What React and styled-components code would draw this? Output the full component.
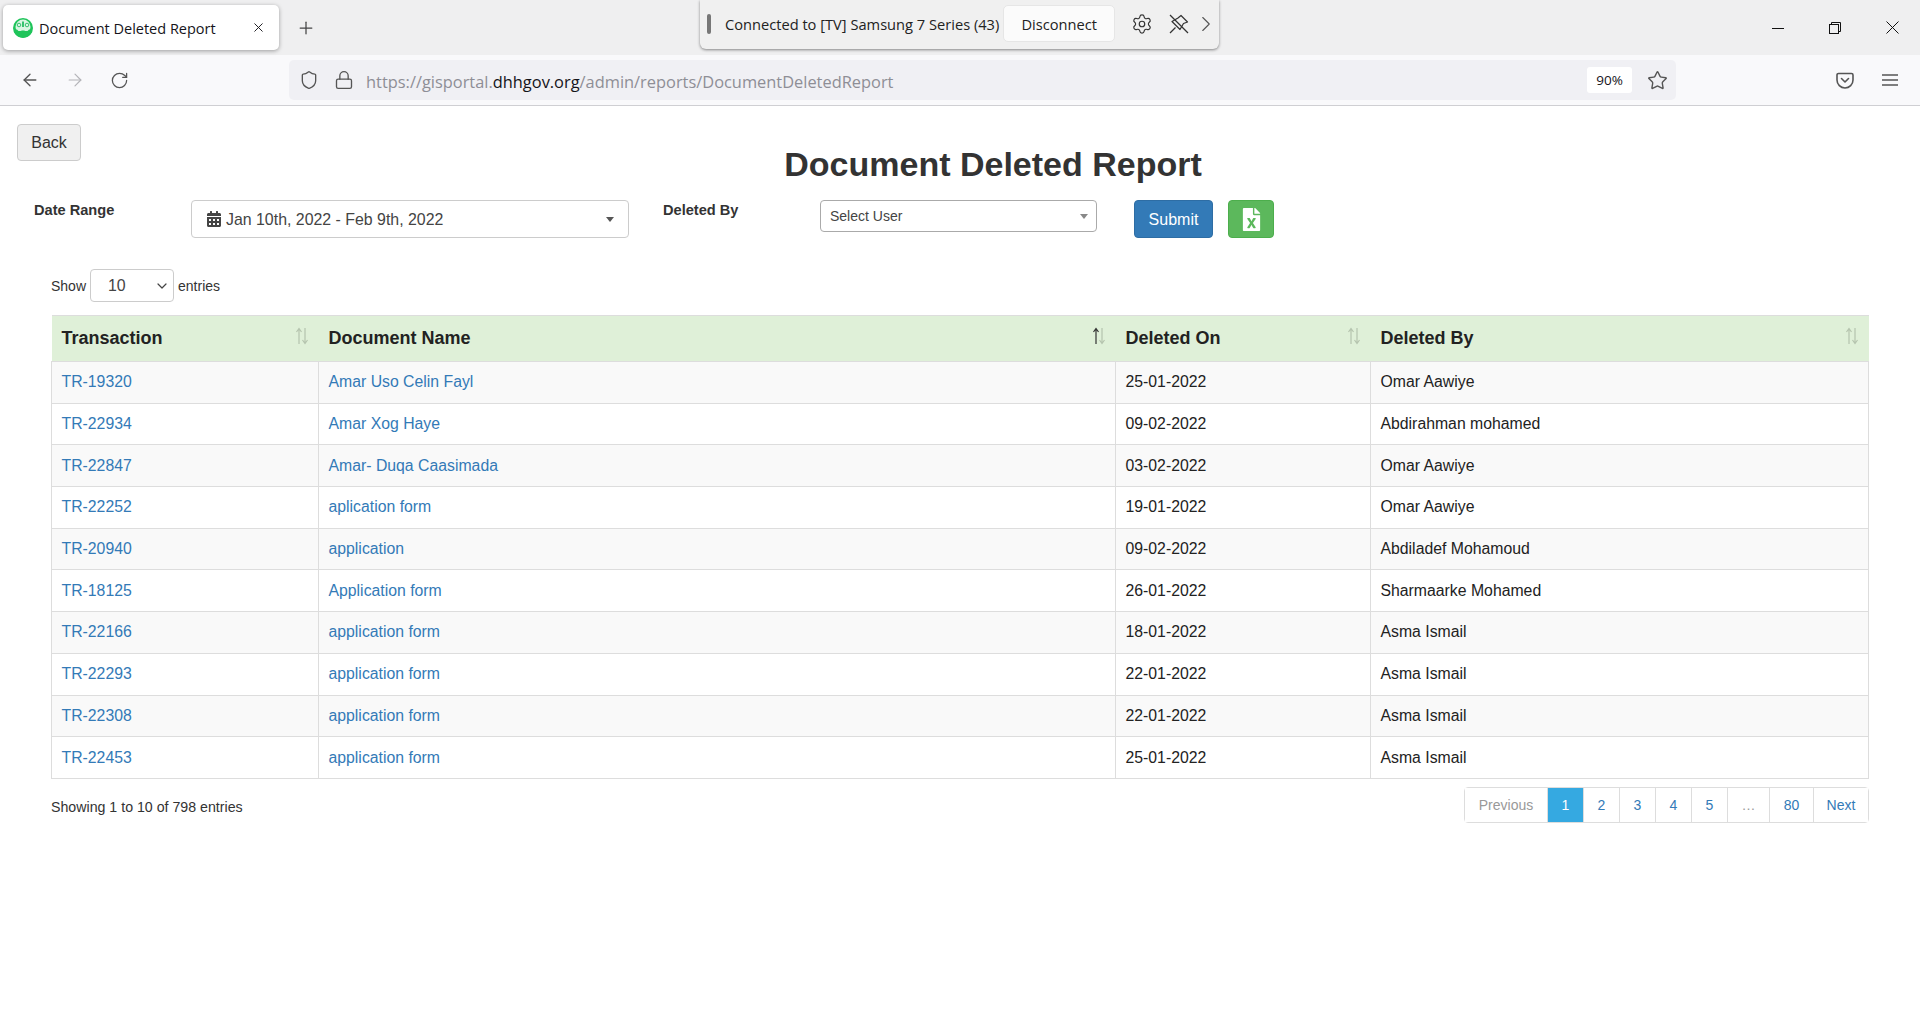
import React from 'react'
import styled, {createGlobalStyle} from 'styled-components'
import {ArrowLeft, ArrowRight, RotateCw, Shield, Lock, Star, Settings, ChevronRight, Plus, X, ChevronDown} from 'lucide-react'
import {FaCalendarAlt, FaFileExcel} from 'react-icons/fa'

const GlobalStyle = createGlobalStyle`
  html, body {
    margin: 0;
    background: #fff;
    font-family: "Liberation Sans", Arial, sans-serif;
    color: #333;
  }
`

// Browser chrome
const Browser = styled.div`
  position: relative;
  width: 1920px;
  height: 1020px;
  overflow: hidden;
  background: #fff;
`
const TabStrip = styled.div`
  height: 55px;
  background: #efeff0;
  display: flex;
  align-items: flex-start;
  padding: 5px 0 0 3px;
  box-sizing: border-box;
`
const Tab = styled.div`
  width: 276px;
  height: 45px;
  background: #fff;
  border-radius: 5px;
  box-shadow: 0 1px 4px rgba(0, 0, 0, .35);
  display: flex;
  align-items: center;
  padding: 0 13px 0 10px;
  box-sizing: border-box;
  font-family: "Open Sans", sans-serif;
  font-size: 14.5px;
  color: #15141a;
`
const TabTitle = styled.span`
  flex: 1;
  margin-left: 6px;
  padding-top: 2px;
  white-space: nowrap;
`
const NewTab = styled.div`
  margin: 13px 0 0 17px;
  color: #444;
  display: flex;
`
const WindowControls = styled.div`
  margin-left: auto;
  height: 45px;
  display: flex;
  align-items: center;
  gap: 45px;
  padding-right: 21px;
  color: #111;
`
const CastBar = styled.div`
  position: absolute;
  left: 700px;
  top: 0;
  width: 519px;
  height: 49px;
  background: #f0f0f0;
  border-radius: 0 0 6px 6px;
  box-shadow: 0 1px 3px rgba(0, 0, 0, .45);
  display: flex;
  align-items: center;
  padding: 0 0 2px 7px;
  box-sizing: border-box;
  font-family: "Open Sans", sans-serif;
  font-size: 14.65px;
  color: #222;
`
const CastGrip = styled.div`
  width: 4px;
  height: 20px;
  background: #777;
  border-radius: 2px;
  margin-right: 14px;
`
const CastLabel = styled.span`
  white-space: nowrap;
`
const DisconnectButton = styled.div`
  width: 112px;
  height: 37px;
  margin-left: 4px;
  background: #fbfbfb;
  border: 1px solid #e6e6e6;
  border-radius: 5px;
  box-sizing: border-box;
  display: flex;
  align-items: center;
  justify-content: center;
`
const CastIcons = styled.div`
  display: flex;
  align-items: center;
  gap: 16px;
  margin-left: 16px;
  color: #333;
`
const CastMore = styled.div`
  display: flex;
  margin-left: 4px;
  color: #555;
`
const Toolbar = styled.div`
  height: 51px;
  background: #f9f9fb;
  border-bottom: 1px solid #cfcfd3;
  box-sizing: border-box;
  display: flex;
  align-items: center;
  color: #555;
  padding-left: 20px;
`
const NavButtons = styled.div`
  display: flex;
  align-items: center;
  gap: 25px;
  width: 269px;
`
const UrlBar = styled.div`
  width: 1387px;
  height: 40px;
  background: #f0f0f4;
  border-radius: 5px;
  display: flex;
  align-items: center;
  padding: 0 8px 0 10px;
  box-sizing: border-box;
`
const LockWrap = styled.div`
  display: flex;
  margin-left: 15px;
`
const UrlText = styled.div`
  flex: 1;
  margin-left: 12px;
  padding-top: 2px;
  font-family: "Open Sans", sans-serif;
  font-size: 16.4px;
  color: #8e8e96;
  white-space: nowrap;
`
const UrlHost = styled.span`
  color: #15141a;
`
const Zoom = styled.div`
  width: 45px;
  height: 26px;
  background: #fff;
  border-radius: 3px;
  margin-right: 15px;
  display: flex;
  align-items: center;
  justify-content: center;
  font-family: "Open Sans", sans-serif;
  font-size: 13.5px;
  color: #15141a;
`
const ToolbarEnd = styled.div`
  display: flex;
  align-items: center;
  gap: 28px;
  margin-left: 160px;
`

// Report page
const Page = styled.div`
  padding-top: 18px;
`
const TopBar = styled.div`
  display: flex;
  align-items: flex-start;
  padding: 0 15px 0 17px;
`
const BackButton = styled.button`
  width: 64px;
  height: 37px;
  padding: 0;
  background: #f0f0f0;
  border: 1px solid #ccc;
  border-radius: 4px;
  font: 16px "Liberation Sans", Arial, sans-serif;
  color: #333;
`
const Title = styled.h2`
  flex: 1;
  margin: 18px 0 0;
  text-align: center;
  font-size: 34px;
  line-height: 44px;
  font-weight: 700;
  color: #333;
`
const FilterRow = styled.div`
  display: flex;
  align-items: flex-start;
  padding: 14px 0 0 34px;
`
const FilterLabel = styled.label`
  width: ${p => p.$width}px;
  font-size: 14.6px;
  line-height: 20px;
  font-weight: 700;
  color: #333;
`
const DatePicker = styled.div`
  width: 438px;
  height: 38px;
  border: 1px solid #ccc;
  border-radius: 4px;
  margin-right: 34px;
  box-sizing: border-box;
  display: flex;
  align-items: center;
  padding: 0 14px;
  font-size: 15.9px;
  color: #444;
`
const DateText = styled.span`
  flex: 1;
  margin-left: 4px;
  padding-top: 1px;
`
const Caret = styled.span`
  width: 0;
  height: 0;
  border-left: 4px solid transparent;
  border-right: 4px solid transparent;
  border-top: 5px solid ${p => p.$color || '#555'};
`
const UserSelect = styled.div`
  width: 277px;
  height: 32px;
  border: 1px solid #aaa;
  border-radius: 4px;
  box-sizing: border-box;
  display: flex;
  align-items: center;
  justify-content: space-between;
  padding: 0 8px 0 9px;
  font-size: 14px;
  color: #444;
`
const SubmitButton = styled.button`
  width: 79px;
  height: 38px;
  margin-left: 37px;
  padding: 1px 0 0;
  background: #337ab7;
  border: 1px solid #2e6da4;
  border-radius: 4px;
  font: 16px "Liberation Sans", Arial, sans-serif;
  color: #fff;
`
const ExcelButton = styled.button`
  width: 46px;
  height: 38px;
  margin-left: 15px;
  padding: 0;
  background: #5cb85c;
  border: 1px solid #4cae4c;
  border-radius: 4px;
  color: #fff;
  display: flex;
  align-items: center;
  justify-content: center;
`
const TableArea = styled.div`
  padding: 31px 51px 0;
`
const LengthRow = styled.div`
  display: flex;
  align-items: center;
  gap: 4px;
  height: 33px;
  font-size: 14px;
  color: #333;
`
const LengthSelect = styled.div`
  width: 84px;
  height: 33px;
  border: 1px solid #ccc;
  border-radius: 4px;
  box-sizing: border-box;
  display: flex;
  align-items: center;
  justify-content: space-between;
  padding: 0 3px 0 17px;
  font-size: 15.9px;
  color: #444;
`
const Table = styled.table`
  width: 1817px;
  margin-top: 13px;
  border-collapse: collapse;
  table-layout: fixed;
  font-size: 15.8px;
`
const HeadCell = styled.th`
  position: relative;
  width: ${p => p.$width}px;
  height: 46px;
  padding: 0 10px;
  box-sizing: border-box;
  background: #dff0d8;
  border-top: 1px solid #ddd;
  border-bottom: 1px solid #ddd;
  text-align: left;
  font-size: 18px;
  font-weight: 700;
  color: #222;
`
const SortMark = styled.svg`
  position: absolute;
  right: 10px;
  top: 11px;
`
const Row = styled.tr`
  background: ${p => (p.$odd ? '#f9f9f9' : '#fff')};
`
const Cell = styled.td`
  height: 41.7px;
  padding: 0 9.5px;
  box-sizing: border-box;
  border: 1px solid #ddd;
  color: #222;
`
const CellLink = styled.a`
  color: #337ab7;
  text-decoration: none;
`
const TableFooter = styled.div`
  display: flex;
  justify-content: space-between;
  align-items: flex-start;
  padding-top: 8px;
`
const Info = styled.div`
  padding-top: 10px;
  font-size: 14.2px;
  line-height: 20px;
  color: #333;
`
const Pager = styled.div`
  display: flex;
  height: 36px;
  border: 1px solid #ddd;
  border-radius: 4px;
  box-sizing: border-box;
  font-size: 14px;
`
const PageItem = styled.div`
  width: ${p => p.$width}px;
  box-sizing: border-box;
  display: flex;
  align-items: center;
  justify-content: center;
  border-left: ${p => (p.$first ? 'none' : '1px solid #ddd')};
  background: ${p => (p.$active ? '#35a9e1' : '#fff')};
  color: ${p => (p.$active ? '#fff' : p.$muted ? '#999' : '#337ab7')};
`

const pages = [
  {label: 'Previous', width: 82, muted: true, first: true},
  {label: '1', width: 36, active: true},
  {label: '2', width: 36},
  {label: '3', width: 36},
  {label: '4', width: 36},
  {label: '5', width: 36},
  {label: '…', width: 42, muted: true},
  {label: '80', width: 44},
  {label: 'Next', width: 55}
]

const rows = [
  ['TR-19320', 'Amar Uso Celin Fayl', '25-01-2022', 'Omar Aawiye'],
  ['TR-22934', 'Amar Xog Haye', '09-02-2022', 'Abdirahman mohamed'],
  ['TR-22847', 'Amar- Duqa Caasimada', '03-02-2022', 'Omar Aawiye'],
  ['TR-22252', 'aplication form', '19-01-2022', 'Omar Aawiye'],
  ['TR-20940', 'application', '09-02-2022', 'Abdiladef Mohamoud'],
  ['TR-18125', 'Application form', '26-01-2022', 'Sharmaarke Mohamed'],
  ['TR-22166', 'application form', '18-01-2022', 'Asma Ismail'],
  ['TR-22293', 'application form', '22-01-2022', 'Asma Ismail'],
  ['TR-22308', 'application form', '22-01-2022', 'Asma Ismail'],
  ['TR-22453', 'application form', '25-01-2022', 'Asma Ismail']
]

const Favicon = () => (
  <svg width='20' height='20' viewBox='0 0 20 20'>
    <circle cx='10' cy='10' r='10' fill='#1fc45a' />
    <circle cx='10' cy='9' r='7.5' fill='#d9f5e2' />
    <path d='M1 11c3 0 4 1 5 3 2-2 6-2 8 0 1-2 2-3 5-3v3a10 10 0 0 1-18 0z' fill='#1fc45a' />
    <path d='M2 13h16v2a10 10 0 0 1-16 0z' fill='#1fc45a' />
    <circle cx='6' cy='7' r='1.8' fill='none' stroke='#35c26e' />
    <circle cx='14' cy='7' r='1.8' fill='none' stroke='#35c26e' />
    <path d='M9 3.5h2V9H9z' fill='#35c26e' />
  </svg>
)

const MinimizeIcon = () => (
  <svg width='12' height='12' viewBox='0 0 12 12' stroke='currentColor'>
    <path d='M0 6.5h12' />
  </svg>
)

const RestoreIcon = () => (
  <svg width='12' height='12' viewBox='0 0 12 12' fill='none' stroke='currentColor'>
    <rect x='.5' y='2.5' width='9' height='9' />
    <path d='M2.5 2.5v-2h9v9h-2' />
  </svg>
)

const CloseIcon = () => (
  <svg width='13' height='13' viewBox='0 0 13 13' stroke='currentColor'>
    <path d='M.5.5l12 12M12.5.5l-12 12' />
  </svg>
)

const PocketIcon = () => (
  <svg width='18' height='17' viewBox='0 0 18 17' fill='none' stroke='currentColor' strokeWidth='1.6' strokeLinecap='round' strokeLinejoin='round'>
    <path d='M2.5 1.5h13a1.5 1.5 0 0 1 1.5 1.5v5a8 8 0 0 1-16 0V3a1.5 1.5 0 0 1 1.5-1.5z' />
    <path d='M5.5 6.5L9 10l3.5-3.5' />
  </svg>
)

const MenuIcon = () => (
  <svg width='16' height='12' viewBox='0 0 16 12' stroke='currentColor' strokeWidth='1.4'>
    <path d='M0 1h16M0 6h16M0 11h16' />
  </svg>
)

const PinOffIcon = () => (
  <svg width='20' height='20' viewBox='0 0 20 20' fill='none' stroke='currentColor' strokeWidth='1.2' strokeLinejoin='round'>
    <path d='M1 1l18 18' />
    <path d='M12 1.5l6.5 6.5-4 1.5-3.5 6-8-8 6-3.5z' />
    <path d='M6.5 13.5L1 19' />
  </svg>
)

const SortIcon = ({active}) => (
  <SortMark width='14' height='18' viewBox='0 0 14 18' fill='none' strokeWidth='1.2'>
    <path d='M4 17V2M1.5 5L4 1.5 6.5 5' stroke={active ? '#333' : '#b5c4ae'} />
    <path d='M10 1v15M7.5 13l2.5 3.5 2.5-3.5' stroke='#b5c4ae' />
  </SortMark>
)

const App = () => (
  <Browser>
    <GlobalStyle />
    <TabStrip>
      <Tab>
        <Favicon />
        <TabTitle>Document Deleted Report</TabTitle>
        <X size={15} strokeWidth={1.5} />
      </Tab>
      <NewTab><Plus size={20} strokeWidth={1.5} /></NewTab>
      <WindowControls>
        <MinimizeIcon />
        <RestoreIcon />
        <CloseIcon />
      </WindowControls>
    </TabStrip>
    <CastBar>
      <CastGrip />
      <CastLabel>Connected to [TV] Samsung 7 Series (43)</CastLabel>
      <DisconnectButton>Disconnect</DisconnectButton>
      <CastIcons>
        <Settings size={22} strokeWidth={1.3} />
        <PinOffIcon />
      </CastIcons>
      <CastMore><ChevronRight size={26} strokeWidth={1} /></CastMore>
    </CastBar>
    <Toolbar>
      <NavButtons>
        <ArrowLeft size={20} strokeWidth={1.6} />
        <ArrowRight size={20} strokeWidth={1.4} color='#b4b4b8' />
        <RotateCw size={19} strokeWidth={1.6} />
      </NavButtons>
      <UrlBar>
        <Shield size={20} strokeWidth={1.6} />
        <LockWrap><Lock size={20} strokeWidth={1.6} /></LockWrap>
        <UrlText>https://gisportal.<UrlHost>dhhgov.org</UrlHost>/admin/reports/DocumentDeletedReport</UrlText>
        <Zoom>90%</Zoom>
        <Star size={21} strokeWidth={1.6} />
      </UrlBar>
      <ToolbarEnd>
        <PocketIcon />
        <MenuIcon />
      </ToolbarEnd>
    </Toolbar>
    <Page>
      <TopBar>
        <BackButton>Back</BackButton>
        <Title>Document Deleted Report</Title>
      </TopBar>
      <FilterRow>
        <FilterLabel $width={157}>Date Range</FilterLabel>
        <DatePicker>
          <FaCalendarAlt size={16} color='#444' />
          <DateText>Jan 10th, 2022 - Feb 9th, 2022</DateText>
          <Caret />
        </DatePicker>
        <FilterLabel $width={157}>Deleted By</FilterLabel>
        <UserSelect>
          Select User
          <Caret $color='#888' />
        </UserSelect>
        <SubmitButton>Submit</SubmitButton>
        <ExcelButton><FaFileExcel size={23} /></ExcelButton>
      </FilterRow>
      <TableArea>
        <LengthRow>
          Show
          <LengthSelect>10<ChevronDown size={16} strokeWidth={1.8} /></LengthSelect>
          entries
        </LengthRow>
        <Table>
          <thead>
            <tr>
              <HeadCell $width={267}>Transaction<SortIcon /></HeadCell>
              <HeadCell $width={797}>Document Name<SortIcon active /></HeadCell>
              <HeadCell $width={255}>Deleted On<SortIcon /></HeadCell>
              <HeadCell $width={498}>Deleted By<SortIcon /></HeadCell>
            </tr>
          </thead>
          <tbody>
            {rows.map((r, i) => (
              <Row key={r[0]} $odd={i % 2 === 0}>
                <Cell><CellLink href='#'>{r[0]}</CellLink></Cell>
                <Cell><CellLink href='#'>{r[1]}</CellLink></Cell>
                <Cell>{r[2]}</Cell>
                <Cell>{r[3]}</Cell>
              </Row>
            ))}
          </tbody>
        </Table>
        <TableFooter>
          <Info>Showing 1 to 10 of 798 entries</Info>
          <Pager>
            {pages.map(p => (
              <PageItem key={p.label} $width={p.width} $active={p.active} $muted={p.muted} $first={p.first}>{p.label}</PageItem>
            ))}
          </Pager>
        </TableFooter>
      </TableArea>
    </Page>
  </Browser>
)

export default App
